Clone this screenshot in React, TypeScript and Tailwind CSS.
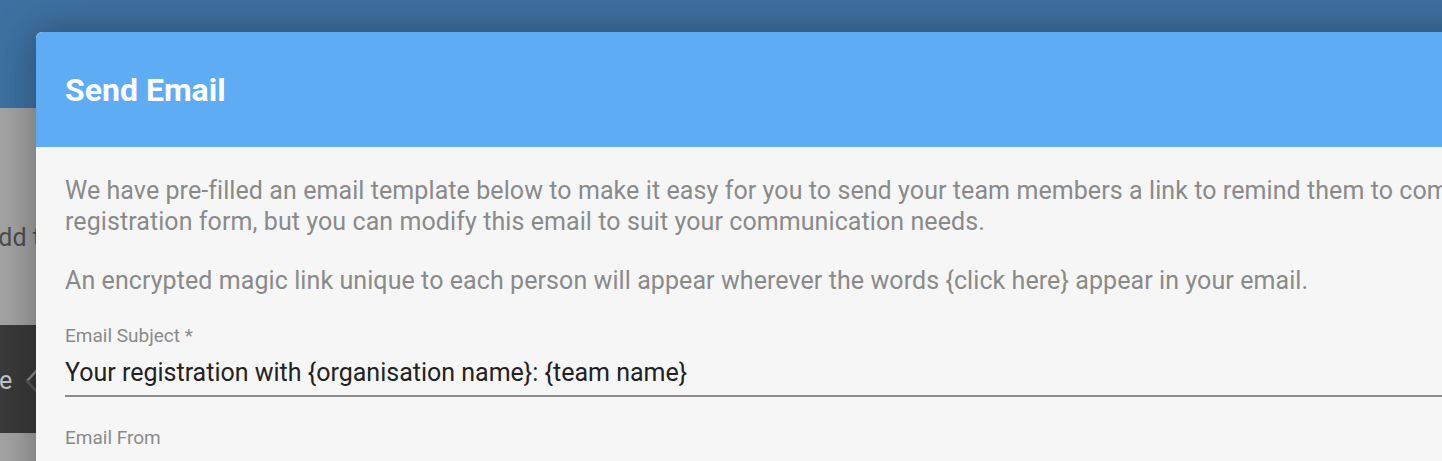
export default function App() {
  return (
    <div
      className="relative h-[461px] w-[1442px] overflow-hidden bg-[#a3a3a3]"
      style={{ fontFamily: "Roboto, 'Noto Sans', sans-serif" }}
    >
      {/* page behind the dialog, dimmed by the backdrop */}
      <div className="flex flex-col">
        <div className="h-[108px] bg-[#3e71a1]" />
        <div className="h-[217px] bg-[#a3a3a3] pt-[115px]">
          <span className="-ml-[18px] block text-[25px] leading-[30px] text-[#4e4e4e]">Add to</span>
        </div>
        <div className="flex h-[108px] items-center bg-[#3a3a3a]">
          <span className="-ml-[1px] mt-[4px] text-[25px] leading-[30px] text-[#c4c4c4]">e</span>
          <svg className="ml-[14px] mt-[4px]" width="20" height="28" viewBox="0 0 20 28" fill="none">
            <polyline points="13,1 1,14" stroke="#8c8c8c" strokeWidth="2.5" strokeLinecap="round" />
            <polyline points="1,14 13,27" stroke="#5a5a5a" strokeWidth="2.5" strokeLinecap="round" />
          </svg>
        </div>
        <div className="h-[28px] bg-[#a3a3a3]" />
      </div>

      {/* dialog */}
      <div className="absolute left-[36px] top-[32px] h-[520px] w-[1600px] overflow-hidden rounded-tl-[6px] bg-[#f6f6f6] shadow-[0_0_40px_rgba(0,0,0,0.35)]">
        <div className="flex h-[115px] items-center bg-[#5eacf3] px-[29px]">
          <h2 className="text-[32px] font-bold text-white">Send Email</h2>
        </div>

        <div className="px-[29px] pt-[28px]">
          <p className="whitespace-nowrap text-[25px] leading-[31px] tracking-[0.08px] text-[#8a8a8a]">
            We have pre-filled an email template below to make it easy for you to send your team members a link to remind them to complete their
            <br />
            registration form, but you can modify this email to suit your communication needs.
          </p>
          <p className="mt-[28px] whitespace-nowrap text-[25px] leading-[31px] tracking-[0.08px] text-[#8a8a8a]">
            An encrypted magic link unique to each person will appear wherever the words {"{click here}"} appear in your email.
          </p>

          <div className="mt-[30px]">
            <label className="block text-[19px] leading-[20px] text-[#8a8a8a]">Email Subject *</label>
            <div className="mt-[12px] border-b-2 border-[#8c8c8c] pb-[7px] text-[25px] leading-[30px] text-[#222222]">
              Your registration with {"{organisation name}"}: {"{team name}"}
            </div>
          </div>

          <div className="mt-[31px]">
            <label className="block text-[19px] leading-[20px] text-[#8a8a8a]">Email From</label>
          </div>
        </div>
      </div>
    </div>
  );
}
